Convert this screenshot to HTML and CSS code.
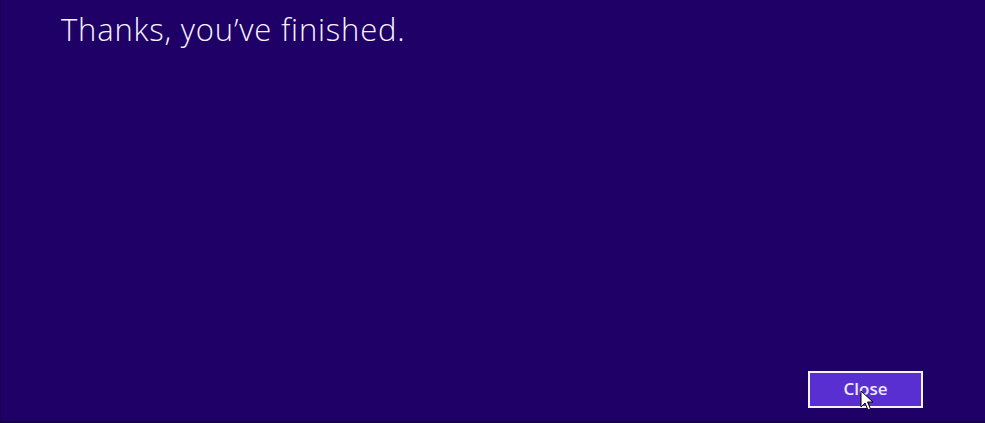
FILE: index.html
```html
<!DOCTYPE html>
<html>
<head>
<meta charset="utf-8">
<link rel="stylesheet" href="styles.css">
</head>
<body>
<div class="page">
  <h1 class="title">Thanks, you’ve finished.</h1>
  <div class="actions">
    <div class="btn-wrap">
      <button class="btn">Close</button>
      <svg class="cursor" width="14" height="22" viewBox="0 0 14 22">
        <path d="M1 1 L1 17 L5 13 L8 20 L10.5 19 L7.5 12 L13 12 Z" fill="#fff" stroke="#000" stroke-width="1" stroke-linejoin="miter"/>
      </svg>
    </div>
  </div>
</div>
</body>
</html>
```
FILE: styles.css
```css
html, body {
  margin: 0;
  padding: 0;
  height: 100%;
  background: #1f0066;
  overflow: hidden;
}
.page {
  box-sizing: border-box;
  height: 423px;
  display: flex;
  flex-direction: column;
  padding: 0 62px 13px 60px;
  border-bottom: 2px solid #16004c;
  border-left: 1px solid #17004f;
}
.title {
  margin: 11px 0 0 0;
  font-family: "Open Sans", "DejaVu Sans", sans-serif;
  font-weight: 300;
  font-size: 31px;
  line-height: 36px;
  color: #f6f3fc;
  letter-spacing: 0.8px;
}
.actions {
  margin-top: auto;
  display: flex;
  justify-content: flex-end;
}
.btn-wrap {
  position: relative;
}
.btn {
  box-sizing: border-box;
  width: 115px;
  height: 37px;
  background: #5a2fd2;
  border: 2px solid #f4f2fb;
  color: #eeeafc;
  font-family: "Open Sans", "DejaVu Sans", sans-serif;
  font-weight: 600;
  font-size: 17px;
  padding: 0 0 2px 0;
  margin: 0;
}
.cursor {
  position: absolute;
  left: 52px;
  top: 19px;
}
```
